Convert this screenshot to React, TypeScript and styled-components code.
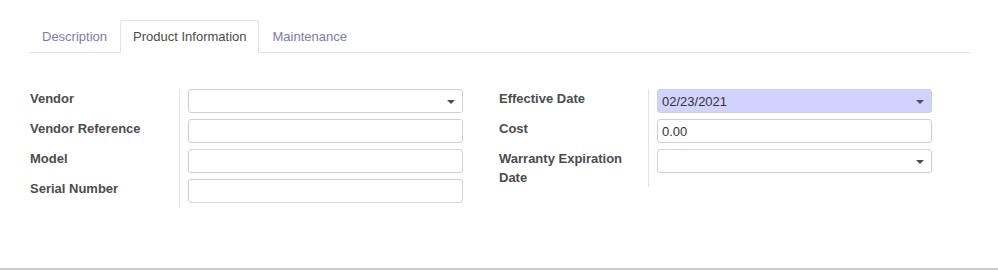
import React from 'react';
import styled, { createGlobalStyle } from 'styled-components';

const GlobalStyle = createGlobalStyle`
  html, body {
    margin: 0;
    padding: 0;
    background: #ffffff;
  }
  body {
    font-family: 'Liberation Sans', Arial, sans-serif;
    font-size: 13px;
    color: #4c4c4c;
  }
`;

/**
 * 页面外层
 */
const Sheet = styled.div`
  width: 998px;
  height: 270px;
  box-sizing: border-box;
  padding: 20px 28px 0 29px;
  border-bottom: 2px solid #c9c9cf;
`;

const TabBar = styled.ul`
  display: flex;
  margin: 0;
  padding: 0;
  list-style: none;
  border-bottom: 1px solid #dee2e6;
`;

const Tab = styled.li<{ $active?: boolean }>`
  height: 33px;
  box-sizing: border-box;
  padding: 0 12px;
  margin-bottom: -1px;
  display: flex;
  align-items: center;
  border: 1px solid ${p => (p.$active ? '#dee2e6' : 'transparent')};
  border-bottom-color: ${p => (p.$active ? '#ffffff' : 'transparent')};
  border-radius: 3px 3px 0 0;
  background: ${p => (p.$active ? '#ffffff' : 'transparent')};
  color: ${p => (p.$active ? '#4c4c4c' : '#7c7bad')};
  cursor: pointer;
  white-space: nowrap;
`;

const Content = styled.div`
  display: flex;
  gap: 36px;
  padding: 36px 0 0 1px;
`;

const Group = styled.div`
  display: grid;
  grid-template-columns: 150px 283px;
  align-content: start;
`;

const LabelCell = styled.div<{ $pad: number }>`
  border-right: 1px solid #dee2e6;
  padding-bottom: ${p => p.$pad}px;
  font-weight: 700;
  line-height: 19px;
  padding-right: 16px;
`;

const FieldCell = styled.div<{ $pad: number }>`
  padding-left: 8px;
  padding-bottom: ${p => p.$pad}px;
`;

const Input = styled.div<{ $highlight?: boolean }>`
  position: relative;
  height: 24px;
  box-sizing: border-box;
  border: 1px solid #cfcfd4;
  border-radius: 3px;
  background: ${p => (p.$highlight ? '#d2d2ff' : '#ffffff')};
  padding: 1px 4px 0;
  display: flex;
  align-items: center;
  font-size: 13px;
  color: #333;
`;

const Caret = styled.span`
  position: absolute;
  right: 7px;
  top: 10px;
  width: 0;
  height: 0;
  border-left: 4px solid transparent;
  border-right: 4px solid transparent;
  border-top: 4px solid #4c4c4c;
`;

interface FieldDef {
  label: string;
  value?: string;
  select?: boolean;
  highlight?: boolean;
}

const leftFields: FieldDef[] = [
  { label: 'Vendor', select: true },
  { label: 'Vendor Reference' },
  { label: 'Model' },
  { label: 'Serial Number' },
];

const rightFields: FieldDef[] = [
  { label: 'Effective Date', value: '02/23/2021', select: true, highlight: true },
  { label: 'Cost', value: '0.00' },
  { label: 'Warranty Expiration Date', select: true },
];

const FieldGroup: React.FC<{ fields: FieldDef[]; lastPad: number }> = ({ fields, lastPad }) => (
  <Group>
    {fields.map((f, i) => {
      const pad = i === fields.length - 1 ? lastPad : 6;
      return (
        <React.Fragment key={f.label}>
          <LabelCell $pad={pad}>{f.label}</LabelCell>
          <FieldCell $pad={pad}>
            <Input $highlight={f.highlight}>
              {f.value}
              {f.select && <Caret />}
            </Input>
          </FieldCell>
        </React.Fragment>
      );
    })}
  </Group>
);

const App: React.FC = () => (
  <>
    <GlobalStyle />
    <Sheet>
      <TabBar>
        <Tab>Description</Tab>
        <Tab $active>Product Information</Tab>
        <Tab>Maintenance</Tab>
      </TabBar>
      <Content>
        <FieldGroup fields={leftFields} lastPad={5} />
        <FieldGroup fields={rightFields} lastPad={0} />
      </Content>
    </Sheet>
  </>
);

export default App;
